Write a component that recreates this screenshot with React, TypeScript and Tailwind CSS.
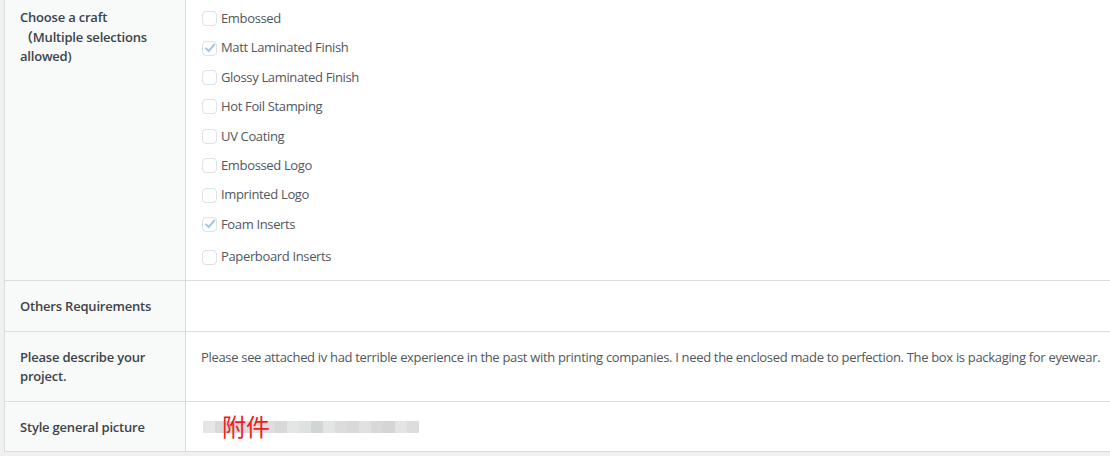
const crafts = [
	{ name: 'Embossed', checked: false },
	{ name: 'Matt Laminated Finish', checked: true },
	{ name: 'Glossy Laminated Finish', checked: false },
	{ name: 'Hot Foil Stamping', checked: false },
	{ name: 'UV Coating', checked: false },
	{ name: 'Embossed Logo', checked: false },
	{ name: 'Imprinted Logo', checked: false },
	{ name: 'Foam Inserts', checked: true },
]

// blurred strip behind the attachment label
const blur = [
	'#e6e6e6', '#dadada', '#d4d4d4', '#dcdcdc', '#e2e2e2', '#dedede', '#d8d8d8', '#e4e5e5',
	'#dfe1e1', '#d2d5d5', '#e3e4e4', '#dcdcdd', '#d9d9db', '#e1e1e2', '#d8d8da', '#d5d5d7',
	'#e4e4e5', '#dddddf',
]

const Check = ({ checked }: { checked: boolean }) => (
	<span className="flex h-[15px] w-[15px] shrink-0 items-center justify-center rounded-[4px] border border-[#dfe1e3] bg-white">
		{checked && (
			<svg width="12" height="12" viewBox="0 0 12 12" fill="none">
				<path
					d="M2 6.4 L4.7 9.2 L10.2 2.6"
					stroke="#9fc3e6"
					strokeWidth="1.9"
					strokeLinecap="round"
					strokeLinejoin="round"
				/>
			</svg>
		)}
	</span>
)

const Label = ({ children }: { children: React.ReactNode }) => (
	<th className="border-r border-[#dcdcde] bg-[#f8f9f9] px-[15px] pt-[16px] pb-[14px] text-left align-top text-[13px] leading-[19.5px] font-semibold tracking-[-0.2px] text-[#3c434a]">
		{children}
	</th>
)

export default function App() {
	return (
		<div
			className="h-[456px] w-[1110px] overflow-hidden bg-[#f0f0f1] pl-[4px]"
			style={{ fontFamily: '"Open Sans", "Noto Sans", "Noto Sans CJK SC", sans-serif' }}>
			<table className="w-[1140px] table-fixed border-collapse border-b border-l border-[#dcdcde] bg-white">
				<colgroup>
					<col className="w-[181px]" />
					<col />
				</colgroup>
				<tbody>
					<tr className="border-b border-[#dcdcde]">
						<th className="border-r border-[#dcdcde] bg-[#f8f9f9] px-[15px] pt-[8px] pb-[15px] text-left align-top text-[13px] leading-[19.5px] font-semibold tracking-[-0.2px] text-[#3c434a]">
							Choose a craft
							<br />
							（Multiple selections allowed)
						</th>
						<td className="px-[16px] pt-[4px] pb-[8px] align-top text-[13px] tracking-[-0.35px] text-[#50575e]">
							<div className="flex flex-col">
								{crafts.map((c) => (
									<label
										key={c.name}
										className="flex h-[29.4px] items-center gap-[4px] leading-[19.5px]">
										<Check checked={c.checked} />
										<span>{c.name}</span>
									</label>
								))}
								<label className="mt-[3px] flex h-[30px] items-center gap-[4px] leading-[19.5px]">
									<Check checked={false} />
									<span>Paperboard Inserts</span>
								</label>
							</div>
						</td>
					</tr>
					<tr className="border-b border-[#dcdcde]">
						<Label>Others Requirements</Label>
						<td className="px-[16px] py-[15px]"></td>
					</tr>
					<tr className="border-b border-[#dcdcde]">
						<Label>Please describe your project.</Label>
						<td className="px-[15px] pt-[16px] pb-[14px] align-top text-[13px] leading-[19.5px] tracking-[-0.32px] whitespace-nowrap text-[#50575e]">
							Please see attached iv had terrible experience in the past with printing companies. I need the
							enclosed made to perfection. The box is packaging for eyewear.
						</td>
					</tr>
					<tr>
						<Label>Style general picture</Label>
						<td className="px-[17px] pt-[15px] pb-[7px] align-top">
							<div className="relative h-[26px] w-[240px]">
								<div className="absolute top-[4px] left-0 flex h-[12px]">
									{blur.map((c, i) => (
										<span key={i} className="h-full w-[12px]" style={{ background: c }} />
									))}
								</div>
								<span className="absolute top-[-5px] left-[19px] text-[24px] leading-[30px] text-[#f21b1b]">
									附件
								</span>
							</div>
						</td>
					</tr>
				</tbody>
			</table>
		</div>
	)
}
